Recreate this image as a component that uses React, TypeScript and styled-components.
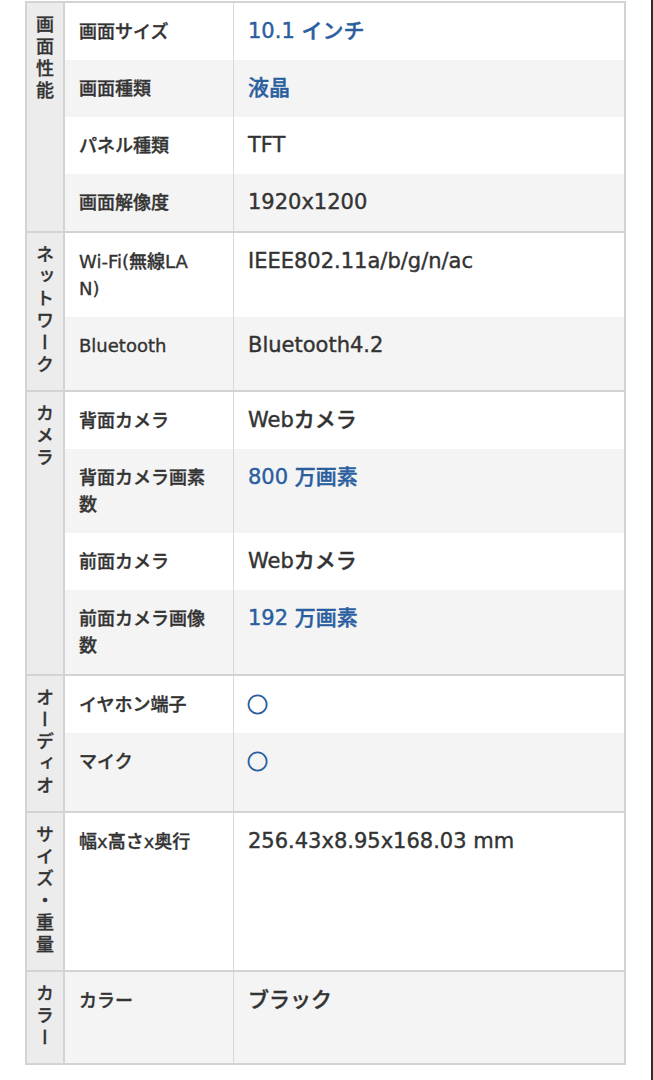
import styled, { createGlobalStyle } from 'styled-components';

const GlobalStyle = createGlobalStyle`
  html, body {
    margin: 0;
    padding: 0;
    background: #fff;
  }
  body {
    font-family: 'DejaVu Sans', 'Noto Sans CJK JP', sans-serif;
    color: #333;
  }
`;

const Page = styled.div`
  box-sizing: border-box;
  width: 653px;
  min-height: 100vh;
  padding: 1px 0 0 25px;
  border-right: 2px solid #2e2e2e;
`;

const Table = styled.div`
  box-sizing: border-box;
  width: 601px;
  border: 2px solid #d3d3d3;
`;

const Group = styled.section`
  display: flex;

  & + & {
    border-top: 2px solid #d3d3d3;
  }
`;

const Category = styled.div`
  flex: 0 0 36px;
  display: flex;
  justify-content: center;
  padding: 12px 0 13px;
  background: #ececec;
  border-right: 2px solid #d3d3d3;
`;

const CategoryText = styled.span`
  writing-mode: vertical-rl;
  font-family: 'Noto Sans CJK JP', sans-serif;
  font-size: 18px;
  line-height: 20px;
  letter-spacing: 4px;
  font-weight: 500;
  color: #333;
  -webkit-text-stroke: 0.3px #333;
`;

const Rows = styled.div`
  flex: 1;
  display: flex;
  flex-direction: column;
`;

const Row = styled.div<{ $shade: boolean }>`
  display: flex;
  background: ${({ $shade }) => ($shade ? '#f4f4f4' : '#fff')};

  &:last-child {
    flex: 1;
  }
`;

const Label = styled.div`
  flex: 0 0 169px;
  box-sizing: border-box;
  padding: 15px 20px 15px 14px;
  border-right: 1px solid #d9d9d9;
  font-size: 18px;
  line-height: 27px;
  font-weight: 500;
  white-space: pre-line;
  -webkit-text-stroke: 0.35px #333;
`;

const Value = styled.div`
  flex: 1;
  padding: 15px 14px;
  font-size: 21px;
  line-height: 27px;
  font-weight: 500;
  -webkit-text-stroke: 0.4px currentColor;
`;

const Link = styled.a`
  color: #2b5e9f;
  text-decoration: none;
  -webkit-text-stroke: 0.4px #2b5e9f;
`;

const Mark = styled.span`
  display: inline-block;
  vertical-align: top;
  height: 27px;
  line-height: 25px;
  margin-left: -1px;
  font-family: 'Noto Sans CJK JP', sans-serif;
  font-size: 21px;
  -webkit-text-stroke: 0.8px #2b5e9f;
`;

type Spec = { label: string; value: string; link?: boolean };

const groups: { title: string; rows: Spec[] }[] = [
  {
    title: '画面性能',
    rows: [
      { label: '画面サイズ', value: '10.1 インチ', link: true },
      { label: '画面種類', value: '液晶', link: true },
      { label: 'パネル種類', value: 'TFT' },
      { label: '画面解像度', value: '1920x1200' },
    ],
  },
  {
    title: 'ネットワーク',
    rows: [
      { label: 'Wi-Fi(無線LA\nN)', value: 'IEEE802.11a/b/g/n/ac' },
      { label: 'Bluetooth', value: 'Bluetooth4.2' },
    ],
  },
  {
    title: 'カメラ',
    rows: [
      { label: '背面カメラ', value: 'Webカメラ' },
      { label: '背面カメラ画素数', value: '800 万画素', link: true },
      { label: '前面カメラ', value: 'Webカメラ' },
      { label: '前面カメラ画像数', value: '192 万画素', link: true },
    ],
  },
  {
    title: 'オーディオ',
    rows: [
      { label: 'イヤホン端子', value: '○', link: true },
      { label: 'マイク', value: '○', link: true },
    ],
  },
  {
    title: 'サイズ・重量',
    rows: [{ label: '幅x高さx奥行', value: '256.43x8.95x168.03 mm' }],
  },
  {
    title: 'カラー',
    rows: [{ label: 'カラー', value: 'ブラック' }],
  },
];

const App = () => {
  let index = 0;
  return (
    <>
      <GlobalStyle />
      <Page>
        <Table>
          {groups.map(group => (
            <Group key={group.title}>
              <Category>
                <CategoryText>{group.title}</CategoryText>
              </Category>
              <Rows>
                {group.rows.map(row => {
                  const shade = index++ % 2 === 1;
                  return (
                    <Row key={row.label} $shade={shade}>
                      <Label>{row.label}</Label>
                      <Value>
                        {row.link ? (
                          <Link href="#">
                            {row.value === '○' ? <Mark>{row.value}</Mark> : row.value}
                          </Link>
                        ) : (
                          row.value
                        )}
                      </Value>
                    </Row>
                  );
                })}
              </Rows>
            </Group>
          ))}
        </Table>
      </Page>
    </>
  );
};

export default App;
